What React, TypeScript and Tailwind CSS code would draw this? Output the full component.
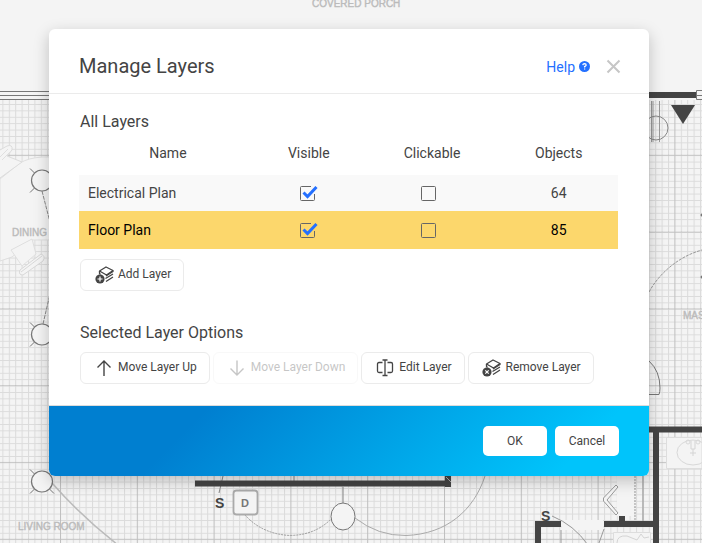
import { useState } from 'react'
import type { ButtonHTMLAttributes, ReactNode } from 'react'

function LightFixture({ cy }: { cy: number }) {
  return (
    <g stroke="#777" fill="#f4f4f4">
      <path d={`M30 ${cy - 12}L54 ${cy + 12}M54 ${cy - 12}L30 ${cy + 12}`} />
      <circle cx="42" cy={cy} r="10.5" strokeWidth="1.2" />
    </g>
  )
}

function FloorPlan() {
  return (
    <svg
      aria-hidden="true"
      className="absolute inset-0 h-full w-full"
      viewBox="0 0 702 543"
      preserveAspectRatio="xMinYMin slice"
      fill="none"
      fontFamily='"Liberation Sans", sans-serif'
    >
      <defs>
        <pattern id="minor" x="60" y="1.6" width="6.4" height="6.4" patternUnits="userSpaceOnUse">
          <path d="M0.5 0V6.4M0 0.5H6.4" stroke="#000" strokeOpacity="0.1" />
        </pattern>
        <pattern id="major" x="60" y="1.1" width="76.8" height="76.8" patternUnits="userSpaceOnUse">
          <path d="M0.5 0V76.8M0 0.5H76.8" stroke="#000" strokeOpacity="0.13" />
        </pattern>
      </defs>
      <rect y="100" width="702" height="443" fill="url(#minor)" />
      <rect y="100" width="702" height="443" fill="url(#major)" />

      {/* top wall */}
      <path d="M0 91.5H60M0 95.5H60M0 99.5H60" stroke="#777" strokeWidth="1.2" />
      <path d="M640 95H696" stroke="#444" strokeWidth="6" />
      <path d="M702 90.5H696.5V99.5H702M697 95.5H702" stroke="#777" fill="#f4f4f4" />
      <path d="M671 105H695L683 124Z" fill="#444" />

      {/* dining table with chairs */}
      <path d="M60 157H42Q28 158 20 163L0 179V261L12 257L32 240H60Z" fill="#f4f4f4" stroke="#dfdfdf" />
      <path d="M0 150L7 146Q13 144 12 150L7 156L22 162L0 178" fill="#f4f4f4" stroke="#dcdcdc" />
      <path d="M0 157L8 149M2 160L10 152M11 250L32 239L36 254L22 266Z" fill="#f4f4f4" stroke="#dfdfdf" />
      <path d="M20 270Q18 275 23 275L43 261Q46 256 41 254ZM21 272L42 256" fill="#f4f4f4" stroke="#d8d8d8" />

      <path d="M42 191L50 222M43 324L50 294" stroke="#888" strokeDasharray="4 1" />
      <path d="M52 483Q82 517 118 545" stroke="#bbb" strokeWidth="1.5" />
      <LightFixture cy={180.5} />
      <LightFixture cy={334.5} />
      <LightFixture cy={481.5} />

      {/* right side */}
      <path d="M651.5 101V142M653 101V142M659.5 101V142" stroke="#999" />
      <circle cx="656" cy="128" r="12" stroke="#888" />
      <path d="M649 292C660 272 680 256 702 250" stroke="#999" strokeDasharray="3 1" />
      <path d="M649 361Q660 371 660 388Q660 392 659 394.5H645" stroke="#777" />
      <circle cx="702" cy="215" r="1.5" fill="#777" />
      <circle cx="702" cy="277" r="1.5" fill="#777" />

      {/* lower walls */}
      <path d="M223 476L219 493M343 487V504M294 476V481" stroke="#888" />
      <path d="M195 483.5H451M448 476V487M640 429.5H702M656 427V543M604 524H656M622 516V524M561 524H538V543" stroke="#444" strokeWidth="6" />
      <path d="M446 477L451 482" stroke="#aaa" />
      <path d="M245 515Q262 534 290 535.5Q316 535 332 518" stroke="#999" strokeDasharray="2 1" />
      <path d="M355 518Q378 536 406 535.5C447 534 474 510 485 476" stroke="#aaa" />
      <ellipse cx="343" cy="516.5" rx="12" ry="13.5" fill="#f4f4f4" stroke="#777" />
      <rect x="233.5" y="490.5" width="24" height="24" rx="3" fill="#f4f4f4" stroke="#aaa" strokeWidth="1.8" />

      {/* closet and door swings */}
      <path d="M562 520H603V530H562ZM617 476H634V516H617Z" fill="#f4f4f4" />
      <path d="M552 516Q574 525 588 545M561 530V543M604 529L599 543" stroke="#999" />
      <path d="M616 485L603.5 498V501L616 515L618 513L607 500L618 487Z" fill="#f4f4f4" stroke="#999" />
      <path d="M643 476V521" stroke="#aaa" strokeWidth="1.5" />
      <path d="M635 476V521" stroke="#999" strokeDasharray="2 1" />

      {/* sink and toilet */}
      <path d="M666.5 437.5H702V468.5H666.5Z" fill="#f4f4f4" stroke="#ddd" />
      <ellipse cx="693" cy="452.5" rx="16" ry="12.5" stroke="#d8d8d8" />
      <path d="M691 441V449H695V441M693 449V456M690 453H696" stroke="#d4d4d4" />
      <circle cx="688" cy="442" r="2" stroke="#d8d8d8" />
      <circle cx="698" cy="442" r="2" stroke="#d8d8d8" />
      <path d="M613.5 543V532.5H650.5V543" fill="#f4f4f4" stroke="#ddd" />
      <path d="M617 543Q617 535 627 536L637 540L641 534L644 538L649 537" stroke="#d4d4d4" />

      <g fontSize="10" fill="#bbb" stroke="#bbb" strokeWidth="0.4">
        <text x="312" y="7">COVERED PORCH</text>
        <text x="12" y="236">DINING ROOM</text>
        <text x="18" y="530">LIVING ROOM</text>
        <text x="683" y="319">MASTER</text>
      </g>
      <g fontWeight="700" fill="#444">
        <text x="215" y="508" fontSize="14">S</text>
        <text x="541" y="521" fontSize="14">S</text>
        <text x="241" y="507" fontSize="11" fill="#777">D</text>
      </g>
    </svg>
  )
}

function LayersIcon({ mark }: { mark: string }) {
  return (
    <svg aria-hidden="true" width="19" height="18" viewBox="0 0 19 18" fill="none" stroke="#444" strokeWidth="1.3" strokeLinejoin="round">
      <path d="M4.5 5L11 1L18 4.5L11.5 9Z" />
      <path d="M4.500 5V7.500L5.500 8.500M18 8L10.500 12.500M18 11L11 15.500M18 4.800V5.500L11 10" />
      <circle cx="5" cy="13" r="4.6" fill="#444" stroke="none" />
      <path d={mark} stroke="#fff" strokeWidth="1.2" />
    </svg>
  )
}

function ArrowIcon({ down = false }: { down?: boolean }) {
  return (
    <svg aria-hidden="true" width="18" height="18" viewBox="0 0 18 18" fill="none" stroke="currentColor" strokeWidth="1.4">
      <path d={down ? 'M9 1.5V16M2.5 9.5L9 16L15.5 9.5' : 'M9 17V2M2.5 8.5L9 2L15.5 8.5'} />
    </svg>
  )
}

function RenameIcon() {
  return (
    <svg aria-hidden="true" width="18" height="18" viewBox="0 0 18 18" fill="none" stroke="currentColor" strokeWidth="1.3">
      <path d="M6.5 3.5H3Q1.5 3.5 1.5 5V12Q1.5 13.5 3 13.5H6.5M11.5 3.5H15Q16.5 3.5 16.5 5V12Q16.5 13.5 15 13.5H11.5" />
      <path d="M9 1.5V16M6.5 1H11.5M6.5 16.5H11.5" />
    </svg>
  )
}

interface CheckBoxProps {
  label: string
  checked: boolean
  onChange: () => void
}

function CheckBox({ label, checked, onChange }: CheckBoxProps) {
  return (
    <label className="relative mx-auto block h-4 w-5">
      <input
        type="checkbox"
        aria-label={label}
        checked={checked}
        onChange={onChange}
        className="absolute inset-0 h-4 w-5 appearance-none"
      />
      <svg aria-hidden="true" className="pointer-events-none absolute inset-0" width="20" height="16" viewBox="0 0 20 16" fill="none">
        {checked ? (
          <>
            <path d="M12 1.5H2.5Q1.5 1.5 1.5 2.5V14.5Q1.5 15.5 2.5 15.5H14.5Q15.5 15.5 15.5 14.5V9" stroke="#666" />
            <path d="M4.500 7.500L8.500 11.500L17.500 2" stroke="#2470ff" strokeWidth="3" />
          </>
        ) : (
          <rect x="1.5" y="1.5" width="14" height="14" rx="1" stroke="#666" />
        )}
      </svg>
    </label>
  )
}

interface LayerButtonProps extends ButtonHTMLAttributes<HTMLButtonElement> {
  icon: ReactNode
}

function LayerButton({ icon, children, ...props }: LayerButtonProps) {
  return (
    <button
      type="button"
      className="flex h-8 items-center gap-1 rounded-md border border-[#ebebeb] bg-white pr-3 pl-[13px] text-xs text-[#444] disabled:opacity-30"
      {...props}
    >
      <span className="flex w-5 justify-center">{icon}</span>
      <span className="pb-0.5">{children}</span>
    </button>
  )
}

const footerButton = 'h-[30px] w-16 rounded-[5px] bg-white text-xs text-[#444]'

export default function App() {
  const [layers, setLayers] = useState([
    { name: 'Electrical Plan', visible: true, clickable: false, objects: 64 },
    { name: 'Floor Plan', visible: true, clickable: false, objects: 85 },
  ])
  const [selected, setSelected] = useState(1)

  const toggle = (index: number, key: 'visible' | 'clickable') =>
    setLayers(layers.map((layer, i) => (i === index ? { ...layer, [key]: !layer[key] } : layer)))

  return (
    <div className="relative min-h-screen overflow-hidden bg-[#f4f4f4] pt-[29px] pr-1 font-['Roboto',sans-serif] text-[#444]">
      <FloorPlan />
      <div
        role="dialog"
        aria-labelledby="dialog-title"
        className="relative mx-auto w-full max-w-[600px] overflow-hidden rounded-md bg-white shadow-[0_5px_16px_rgba(0,0,0,0.22)]"
      >
        <header className="flex items-center border-b border-[#ebebeb] pt-[23px] pr-7 pb-[13px] pl-[30px]">
          <h1 id="dialog-title" className="flex-1 text-xl leading-7">Manage Layers</h1>
          <a href="#help" className="flex items-center gap-1 pt-px text-sm text-[#2470ff]">
            Help
            <svg aria-hidden="true" width="11" height="11" viewBox="0 0 11 11">
              <circle cx="5.5" cy="5.5" r="5.5" fill="#2470ff" />
              <path d="M3.8 4.2Q4 2.7 5.5 2.7Q7.2 2.8 7.2 4.2Q7 5 5.6 5.7V6.5M5.6 7.4V8.6" fill="none" stroke="#fff" strokeWidth="1.3" />
            </svg>
          </a>
          <button type="button" aria-label="Close" className="ml-4 text-[#c6c6c6]">
            <svg width="15" height="15" viewBox="0 0 15 15" fill="none" stroke="currentColor" strokeWidth="2">
              <path d="M1.500 1.500L13.500 13.500M13.500 1.500L1.500 13.500" />
            </svg>
          </button>
        </header>

        <main className="pt-4 pr-[30px] pb-[21px] pl-[31px]">
          <h2 className="text-base">All Layers</h2>
          <table className="-ml-px w-full table-fixed text-sm">
            <thead>
              <tr className="h-[41px]">
                <th className="w-[33%] pb-1 font-normal">Name</th>
                <th className="w-[20%] pr-1 pb-1 font-normal">Visible</th>
                <th className="w-[25%] pb-1 font-normal">Clickable</th>
                <th className="w-[22%] pb-1 font-normal">Objects</th>
              </tr>
            </thead>
            <tbody>
              {layers.map((layer, i) => (
                <tr
                  key={layer.name}
                  onClick={() => setSelected(i)}
                  className={i === selected ? 'h-[38px] bg-[#fcd76c] text-black' : 'h-9 bg-[#f9f9f9]'}
                >
                  <td className="pl-[9px]">{layer.name}</td>
                  <td className="pr-1">
                    <CheckBox label={`${layer.name} visible`} checked={layer.visible} onChange={() => toggle(i, 'visible')} />
                  </td>
                  <td className="pr-1">
                    <CheckBox label={`${layer.name} clickable`} checked={layer.clickable} onChange={() => toggle(i, 'clickable')} />
                  </td>
                  <td className="text-center">{layer.objects}</td>
                </tr>
              ))}
            </tbody>
          </table>
          <div className="mt-[10px] flex">
            <LayerButton icon={<LayersIcon mark="M5 10.5V15.5M2.5 13H7.5" />}>Add Layer</LayerButton>
          </div>

          <h2 className="mt-[30px] text-base">Selected Layer Options</h2>
          <div className="mt-[7px] flex flex-wrap gap-[3px]">
            <LayerButton icon={<ArrowIcon />}>Move Layer Up</LayerButton>
            <LayerButton icon={<ArrowIcon down />} disabled>Move Layer Down</LayerButton>
            <LayerButton icon={<RenameIcon />}>Edit Layer</LayerButton>
            <LayerButton icon={<LayersIcon mark="M3.3 11.3L6.7 14.7M6.7 11.3L3.3 14.7" />}>Remove Layer</LayerButton>
          </div>
        </main>

        <footer className="flex justify-end gap-2 border-t border-[#dcdcdc] bg-[linear-gradient(135deg,#007fd0_24%,#00c4fb_86%)] px-[30px] py-5">
          <button type="button" className={footerButton}>OK</button>
          <button type="button" className={footerButton}>Cancel</button>
        </footer>
      </div>
    </div>
  )
}
